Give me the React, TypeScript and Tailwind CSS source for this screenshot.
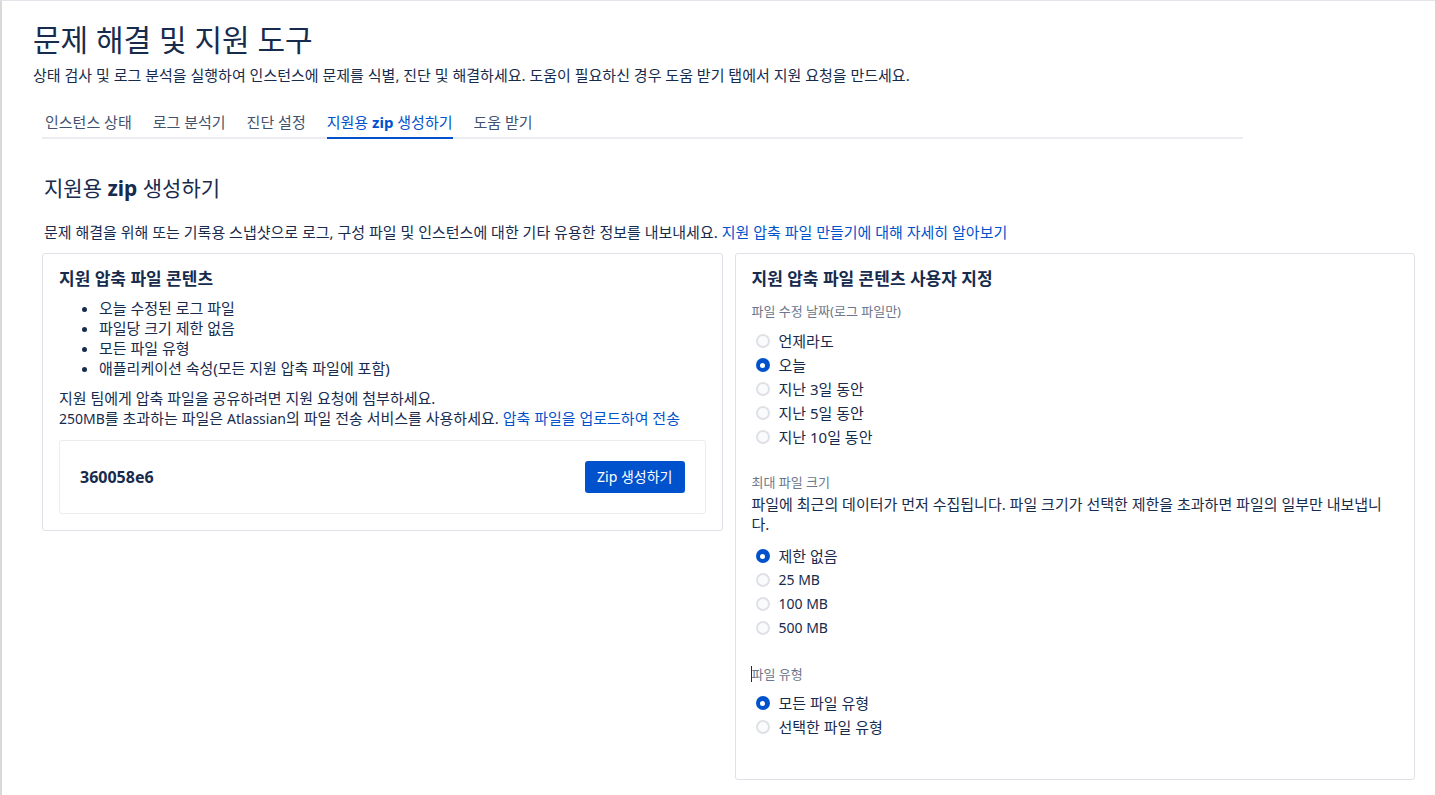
import React from "react";

const FONT = { fontFamily: '"Noto Sans", "Noto Sans CJK KR", sans-serif' };

function Radio({ checked, label, small }: { checked?: boolean; label: string; small?: boolean }) {
  return (
    <div className="flex items-center h-6">
      {checked ? (
        <span className="ml-1 w-[14px] h-[14px] rounded-full bg-[#0052cc] flex items-center justify-center">
          <span className="w-[5px] h-[5px] rounded-full bg-white" />
        </span>
      ) : (
        <span className="ml-1 w-[14px] h-[14px] rounded-full bg-[#fafbfc] border-2 border-[#dfe1e6]" />
      )}
      <span
        className={
          small
            ? "ml-[9px] text-[14px] leading-5 text-[#172b4d]"
            : "ml-[9px] text-[15px] leading-5 text-[#172b4d]"
        }
      >
        {label}
      </span>
    </div>
  );
}

export default function App() {
  const tabs = ["인스턴스 상태", "로그 분석기", "진단 설정", "지원용 zip 생성하기", "도움 받기"];
  return (
    <div
      style={FONT}
      className="min-h-[795px] bg-white border-t border-l-2 border-t-[#e4e5ea] border-l-[#d9d9d9] text-[#172b4d]"
    >
      <div className="pl-[31px] pt-[23px]">
        <h1 className="text-[30px] leading-8 font-normal text-[#172b4d]">문제 해결 및 지원 도구</h1>
        <p className="mt-[9px] text-[15px] leading-5">
          상태 검사 및 로그 분석을 실행하여 인스턴스에 문제를 식별, 진단 및 해결하세요. 도움이 필요하신 경우 도움 받기 탭에서 지원 요청을 만드세요.
        </p>
      </div>

      <div className="ml-10 mt-[27px] w-[1201px] border-b-2 border-[#ebecf0] flex gap-[21px] pl-[3px]">
        {tabs.map((t, i) => (
          <div
            key={t}
            className={
              i === 3
                ? "text-[15px] leading-5 pb-[5px] -mb-[2px] border-b-2 border-[#0052cc] text-[#0052cc]"
                : "text-[15px] leading-5 pb-[5px] -mb-[2px] border-b-2 border-transparent text-[#42526e]"
            }
          >
            {i === 3 ? (
              <>
                지원용 <span className="font-bold">zip</span> 생성하기
              </>
            ) : (
              t
            )}
          </div>
        ))}
      </div>

      <div className="pl-10 pr-5 pt-[35px] pb-[15px]">
        <h2 className="pl-[2px] text-[21px] leading-7 font-normal">
          지원용 <span className="font-bold">zip</span> 생성하기
        </h2>
        <p className="pl-[2px] mt-5 text-[15px] leading-5">
          문제 해결을 위해 또는 기록용 스냅샷으로 로그, 구성 파일 및 인스턴스에 대한 기타 유용한 정보를 내보내세요.{" "}
          <a className="text-[#0052cc]">지원 압축 파일 만들기에 대해 자세히 알아보기</a>
        </p>

        <div className="mt-[11px] grid grid-cols-2 gap-3 items-start">
          {/* Left card */}
          <div className="border border-[#dfe1e6] rounded-[3px] p-4 pt-[15px]">
            <h3 className="text-[17px] leading-5 font-bold">지원 압축 파일 콘텐츠</h3>
            <ul className="mt-[9px] list-disc pl-10 text-[15px] leading-5">
              <li>오늘 수정된 로그 파일</li>
              <li>파일당 크기 제한 없음</li>
              <li>모든 파일 유형</li>
              <li>애플리케이션 속성(모든 지원 압축 파일에 포함)</li>
            </ul>
            <p className="mt-[10px] text-[15px] leading-5">
              지원 팀에게 압축 파일을 공유하려면 지원 요청에 첨부하세요.
              <br />
              <span className="text-[14px]">250MB</span>를 초과하는 파일은 <span className="text-[14px]">Atlassian</span>의 파일 전송 서비스를 사용하세요.{" "}
              <a className="text-[#0052cc]">압축 파일을 업로드하여 전송</a>
            </p>
            <div className="mt-[11px] border border-[#ebecf0] rounded-[3px] p-5 flex items-center justify-between">
              <span className="text-[16px] font-bold leading-5">360058e6</span>
              <button className="h-8 px-3 rounded-[3px] bg-[#0052cc] text-white text-[14px] leading-5">
                Zip 생성하기
              </button>
            </div>
          </div>

          {/* Right card */}
          <div className="border border-[#dfe1e6] rounded-[3px] px-4 pt-[15px] pb-10">
            <h3 className="text-[17px] leading-5 font-bold">지원 압축 파일 콘텐츠 사용자 지정</h3>

            <div className="mt-[14px] text-[13px] leading-4 text-[#6b778c]">파일 수정 날짜(로그 파일만)</div>
            <div className="mt-[10px]">
              <Radio label="언제라도" />
              <Radio label="오늘" checked />
              <Radio label="지난 3일 동안" />
              <Radio label="지난 5일 동안" />
              <Radio label="지난 10일 동안" />
            </div>

            <div className="mt-[25px] text-[13px] leading-4 text-[#6b778c]">최대 파일 크기</div>
            <p className="mt-1 text-[15px] leading-5">
              <span className="block whitespace-nowrap">
                파일에 최근의 데이터가 먼저 수집됩니다. 파일 크기가 선택한 제한을 초과하면 파일의 일부만 내보냅니
              </span>
              <span className="block">다.</span>
            </p>
            <div className="mt-[10px]">
              <Radio label="제한 없음" checked />
              <Radio label="25 MB" small />
              <Radio label="100 MB" small />
              <Radio label="500 MB" small />
            </div>

            <div className="mt-[26px] text-[13px] leading-4 text-[#6b778c] flex items-center">
              <span className="w-px h-4 bg-[#172b4d] -ml-px" />
              <span>파일 유형</span>
            </div>
            <div className="mt-[9px]">
              <Radio label="모든 파일 유형" checked />
              <Radio label="선택한 파일 유형" />
            </div>
          </div>
        </div>
      </div>
    </div>
  );
}
